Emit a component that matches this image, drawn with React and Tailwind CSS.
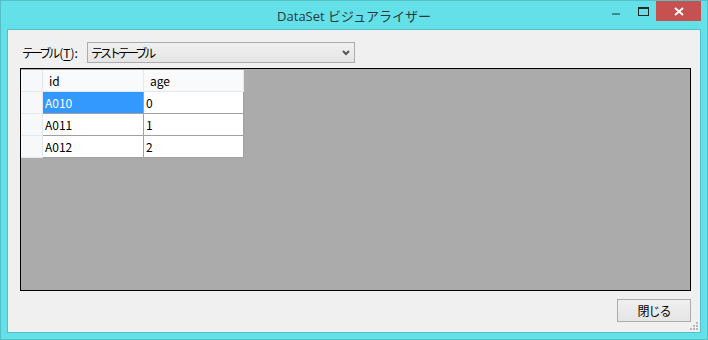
import React from 'react';

const rows = [
    { id: 'A010', age: '0', selected: true },
    { id: 'A011', age: '1' },
    { id: 'A012', age: '2' },
];

function SizeGrip() {
    const dots = [[6, 0], [3, 3], [6, 3], [0, 6], [3, 6], [6, 6]];
    return (
        <svg width="8" height="8" viewBox="0 0 8 8" className="absolute right-[2px] bottom-[2px]">
            {dots.map(([x, y], i) => (
                <rect key={i} x={x} y={y} width="2" height="2" fill="#b8b8b8" />
            ))}
        </svg>
    );
}

export default function App() {
    return (
        <div
            className="w-[708px] h-[340px] bg-[#64e0e8] border border-[#55bfc8] flex flex-col px-[6px] pb-[6px]"
            style={{ fontFamily: '"Noto Sans CJK JP", sans-serif' }}
        >
            {/* title bar */}
            <div className="h-[28px] relative flex items-center justify-center">
                <span
                    className="text-[13px] text-[#2a3a3c] leading-none pt-[2px] whitespace-nowrap"
                    style={{ fontFamily: '"Open Sans", "Noto Sans CJK JP", sans-serif' }}
                >
                    DataSet ビジュアライザー
                </span>
                <div className="absolute left-[605px] top-[12px] w-[8px] h-[2px] bg-[#3d8a90]"></div>
                <div className="absolute left-[631px] top-[6px] w-[11px] h-[9px] border border-[#262626] border-t-2"></div>
                <div className="absolute left-[649px] top-0 w-[45px] h-[20px] bg-[#c75050] flex items-center justify-center">
                    <svg width="10" height="9" viewBox="0 0 10 9">
                        <path d="M1 1 L9 8 M9 1 L1 8" stroke="#fff" strokeWidth="2" />
                    </svg>
                </div>
            </div>

            {/* client area */}
            <div className="flex-1 bg-[#f0f0f0] border border-[#55bfc8] relative flex flex-col pt-[12px] pl-[12px] pr-[9px] pb-[10px] text-[12px] text-black">
                <div className="flex items-center h-[21px]">
                    <span className="w-[67px] shrink-0 pl-[2px] leading-none whitespace-nowrap">
                        <span className="tracking-[-3px]">テーブル</span>
                        <span className="ml-[2px]">(<span className="underline underline-offset-2">T</span>):</span>
                    </span>
                    <div className="w-[268px] h-[21px] border border-[#acacac] bg-gradient-to-b from-[#f0f0f0] to-[#e5e5e5] flex items-center justify-between pl-[3px] pr-[4px]">
                        <span className="leading-none tracking-[-3px]">テストテーブル</span>
                        <svg width="8" height="6" viewBox="0 0 8 6">
                            <path d="M1 1 L4 4 L7 1" stroke="#555" strokeWidth="2" fill="none" />
                        </svg>
                    </div>
                </div>

                {/* grid */}
                <div className="mt-[5px] h-[223px] border border-black bg-[#ababab] pt-[1px]">
                    <div className="flex h-[22px]">
                        <div className="w-[22px] bg-[#f7f8fa] border-b border-r border-[#e3e8ee]"></div>
                        <div className="w-[101px] bg-[#f9fafb] border-b border-r border-[#e3e8ee] flex items-center pl-[6px]">id</div>
                        <div className="w-[100px] bg-[#f9fafb] border-b border-r border-[#e3e8ee] flex items-center pl-[6px]">age</div>
                    </div>
                    {rows.map((r) => (
                        <div key={r.id} className="flex h-[22px]">
                            <div className="w-[22px] bg-[#f7f8fa] border-b border-r border-[#e3e8ee]"></div>
                            <div className={'w-[101px] border-b border-r border-[#a0a0a0] flex items-center pl-[2px] ' + (r.selected ? 'bg-[#3399ff] text-white' : 'bg-white')}>
                                {r.id}
                            </div>
                            <div className="w-[100px] bg-white border-b border-r border-[#a0a0a0] flex items-center pl-[2px]">
                                {r.age}
                            </div>
                        </div>
                    ))}
                </div>

                <div className="mt-[8px] flex justify-end">
                    <div className="w-[74px] h-[23px] border border-[#acacac] bg-gradient-to-b from-[#f0f0f0] to-[#e5e5e5] flex items-center justify-center tracking-[-1px]">
                        閉じる
                    </div>
                </div>

                <SizeGrip />
            </div>
        </div>
    );
}
